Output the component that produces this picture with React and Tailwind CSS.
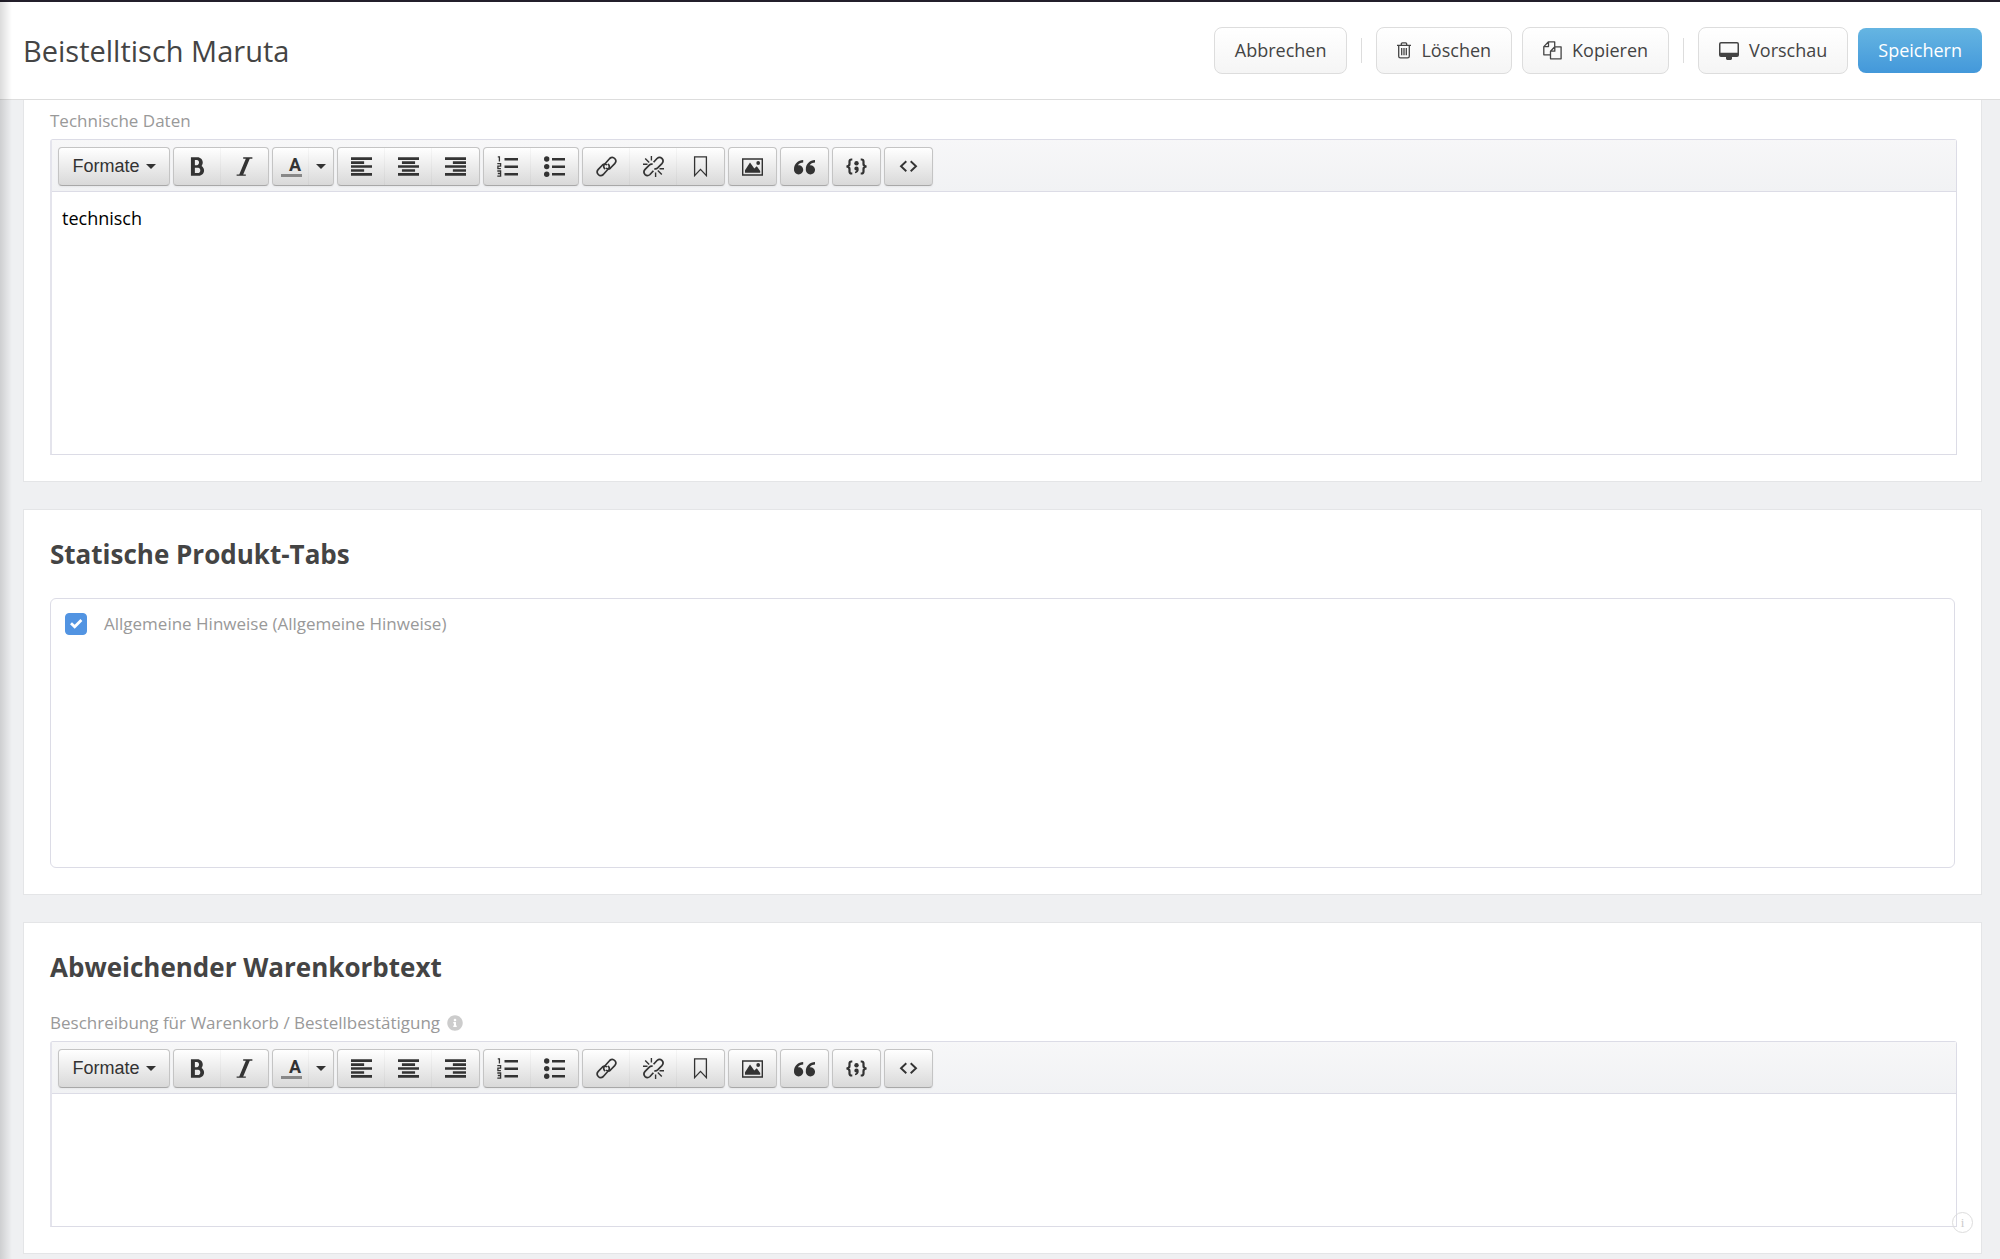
import React, { useState } from 'react';
import {
  ImBold,
  ImItalic,
  ImParagraphLeft,
  ImParagraphCenter,
  ImParagraphRight,
  ImQuotesLeft,
} from 'react-icons/im';
import { FaInfoCircle } from 'react-icons/fa';

// icônes de l'en-tête
const TrashIcon = () => (
  <svg className="w-[14px] h-[17px]" viewBox="0 0 14 17" fill="none" stroke="currentColor" strokeWidth="1.3" aria-hidden="true">
    <path d="M0 3.4h14M4.3 3.2V2Q4.3 .9 5.4 .9h3.2Q9.700 .9 9.700 2v1.2M1.700 3.600v10.600q0 1.700 1.700 1.700h7.200q1.700 0 1.700-1.700V3.600M4.700 6v7.300M7 6v7.300M9.300 6v7.300" />
  </svg>
);

const CopyIcon = () => (
  <svg className="w-[19px] h-[19px]" viewBox="0 0 19 19" fill="none" stroke="currentColor" strokeWidth="1.3" strokeLinejoin="round" aria-hidden="true">
    <path d="M7.500 13.800H.8V5.600L5.500 .8h6.200v5M5.500 .8v4.800H.8" />
    <path d="M7.500 10.200l4.300-4.400h6.300v12H7.500zM11.800 5.800v4.400H7.500" />
  </svg>
);

const MonitorIcon = () => (
  <svg className="w-[20px] h-[18px]" viewBox="0 0 20 18" fill="currentColor" aria-hidden="true">
    <path fillRule="evenodd" d="M2 0h16q2 0 2 2v11q0 2-2 2h-5v2h-.5v1h-5v-1H7v-2H2q-2 0-2-2V2Q0 0 2 0zM1.500 2v8.800h17V2q0-.5-.5-.5H2q-.5 0-.5 .5z" />
  </svg>
);

// icônes de la barre d'outils
const NumListIcon = () => (
  <svg className="w-[21px] h-[21px]" viewBox="0 0 21 21" fill="currentColor" aria-hidden="true">
    <path d="M7.500 2h13.500v2.500H7.500zM7.500 9.500h13.500v2.500H7.500zM7.500 17h13.500v2.500H7.500z" />
    <path d="M.8 .8H2.400V5.600M.3 7.700h3.300v2.500H.9v2.400h3M.3 15h3.300v5.200H.3M.8 17.500h2.800" fill="none" stroke="currentColor" strokeWidth="1.3" />
  </svg>
);

const BulletListIcon = () => (
  <svg className="w-[21px] h-[21px]" viewBox="0 0 21 21" fill="currentColor" aria-hidden="true">
    <path d="M8 2h13v2.500H8zM8 9.500h13v2.500H8zM8 17h13v2.500H8z" />
    <circle cx="2.700" cy="3" r="2.700" />
    <circle cx="2.700" cy="10.600" r="2.700" />
    <circle cx="2.700" cy="18.200" r="2.700" />
  </svg>
);

const LinkIcon = () => (
  <svg className="w-[21px] h-[21px]" viewBox="0 0 21 21" fill="none" stroke="currentColor" strokeWidth="1.700" strokeLinecap="round" aria-hidden="true">
    <path d="M8.500 12.500q-1.800-2.400 .3-4.500l4.900-5.500q2.700-2.400 5 0q2.400 2.600 0 5.200l-4.200 4.300q-1.900 1.700-4 .4" />
    <path d="M12.500 8.500q1.800 2.400-.3 4.500l-4.900 5.500q-2.700 2.400-5 0q-2.400-2.600 0-5.200l4.200-4.300q1.900-1.700 4-.4" />
  </svg>
);

const UnlinkIcon = () => (
  <svg className="w-[21px] h-[21px]" viewBox="0 0 21 21" fill="none" stroke="currentColor" strokeWidth="1.700" aria-hidden="true">
    <path d="M10.600 6.300l3.400-3.800q2.600-2.400 4.900-.1q2.400 2.600 0 5.200l-4.200 4.300q-1.500 1.400-3.400 .8" />
    <path d="M10.400 14.700l-3.400 3.800q-2.600 2.400-4.900 .1q-2.400-2.600 0-5.200l4.200-4.300q1.500-1.400 3.400-.8" />
    <path d="M8.400 0v4.500M2.200 2.500l4 4M0 8.200h4.500M12.600 21v-4.500M18.800 18.500l-4-4M21 12.800h-4.500" strokeWidth="1.400" />
  </svg>
);

const BookmarkIcon = () => (
  <svg className="w-[21px] h-[21px]" viewBox="0 0 21 21" fill="none" stroke="currentColor" strokeWidth="1.300" aria-hidden="true">
    <path d="M4.600 .8h11.800v18.800l-5.900-6.200-5.900 6.200z" />
  </svg>
);

const ImageIcon = () => (
  <svg className="w-[21px] h-[21px]" viewBox="0 0 21 21" fill="currentColor" aria-hidden="true">
    <path d="M.7 3h19.600v16H.7z" fill="none" stroke="currentColor" strokeWidth="1.400" />
    <path d="M3 16.800v-2.600L8 6.500l4.300 6 2.500-2.300 3.400 4.800v1.800z" />
    <circle cx="16.200" cy="7" r="1.900" />
  </svg>
);

const CodeSampleIcon = () => (
  <svg className="w-[21px] h-[21px]" viewBox="0 0 21 21" fill="none" stroke="currentColor" strokeWidth="2.200" aria-hidden="true">
    <path d="M6.300 3.500H5.500q-2 0-2 2v2.600q0 2.100-3 2.400q3 .3 3 2.400v2.600q0 2 2 2h.8M14.700 3.500h.8q2 0 2 2v2.600q0 2.100 3 2.400q-3 .3-3 2.400v2.600q0 2-2 2h-.8" />
    <circle cx="10.500" cy="7.300" r="2.200" fill="currentColor" stroke="none" />
    <path d="M8.300 12.700a2.200 2.200 0 1 1 4.400 0q.3 3.700-3.700 4.500v-1.500q1.300-.5 1.400-1.200q-2.100-.2-2.100-1.800z" fill="currentColor" stroke="none" />
  </svg>
);

const CodeIcon = () => (
  <svg className="w-[21px] h-[21px]" viewBox="0 0 21 21" fill="none" stroke="currentColor" strokeWidth="1.900" aria-hidden="true">
    <path d="M8.300 5.300L3 10.300l5.300 5M12.700 5.300l5.300 5-5.300 5" />
  </svg>
);

const Caret = () => (
  <svg className="w-[10px] h-[5px]" viewBox="0 0 10 5" fill="currentColor" aria-hidden="true">
    <path d="M0 0h10L5 5z" />
  </svg>
);

const toolGroups = [
  [
    { label: 'Linksbündig', icon: <ImParagraphLeft size={21} /> },
    { label: 'Zentriert', icon: <ImParagraphCenter size={21} /> },
    { label: 'Rechtsbündig', icon: <ImParagraphRight size={21} /> },
  ],
  [
    { label: 'Nummerierte Liste', icon: <NumListIcon /> },
    { label: 'Aufzählung', icon: <BulletListIcon /> },
  ],
  [
    { label: 'Link einfügen', icon: <LinkIcon /> },
    { label: 'Link entfernen', icon: <UnlinkIcon /> },
    { label: 'Textmarke', icon: <BookmarkIcon /> },
  ],
  [{ label: 'Bild einfügen', icon: <ImageIcon /> }],
  [{ label: 'Zitat', icon: <ImQuotesLeft size={21} /> }],
  [{ label: 'Codebeispiel', icon: <CodeSampleIcon /> }],
  [{ label: 'Quellcode', icon: <CodeIcon /> }],
];

const ToolGroup = ({ children }) => (
  <div className="flex h-[39px] rounded-[4px] border border-[#c4c4c4] border-b-[#a8a8a8] bg-linear-to-b from-white to-[#d9d9d9] shadow-xs divide-x divide-black/3">
    {children}
  </div>
);

const ToolButton = ({ label, icon }) => (
  <button type="button" aria-label={label} className="w-[47px] flex items-center justify-center">
    {icon}
  </button>
);

const Editor = ({ id, value, onChange, size }) => (
  <div className="-mr-[2px] border border-l-2 border-[#dcdce6] border-l-[#e4e4ec] rounded-t-[3px]">
    <div className="flex flex-wrap gap-[3px] px-[6px] pt-[7px] pb-[5px] bg-linear-to-b from-[#f7f7f8] to-[#f1f2f4] border-b border-[#dcdce6] text-[#333333]">
      <ToolGroup>
        <button type="button" className="w-[110px] flex items-center justify-center gap-[6px] font-['Liberation_Sans',sans-serif] text-[18px]">
          Formate
          <Caret />
        </button>
      </ToolGroup>
      <ToolGroup>
        <ToolButton label="Fett" icon={<ImBold size={21} />} />
        <ToolButton label="Kursiv" icon={<ImItalic size={21} />} />
      </ToolGroup>
      <ToolGroup>
        <button type="button" aria-label="Textfarbe" className="pl-2 pr-[6px] flex items-center">
          <span className="w-[21px] h-[21px] pr-px border-b-[3px] border-[#888888] text-right text-[18px] leading-[18px] font-bold font-['Roboto',sans-serif]">A</span>
        </button>
        <button type="button" aria-label="Farbe wählen" className="w-[24px] flex items-center justify-center">
          <Caret />
        </button>
      </ToolGroup>
      {toolGroups.map((group, index) => (
        <ToolGroup key={index}>
          {group.map((tool) => (
            <ToolButton key={tool.label} label={tool.label} icon={tool.icon} />
          ))}
        </ToolGroup>
      ))}
    </div>
    <textarea
      id={id}
      rows={size}
      value={value}
      onChange={(e) => onChange(e.target.value)}
      className="block w-full resize-none px-[10px] pt-[13px] pb-[15px] text-[18px] leading-[26px] text-black outline-none"
    />
  </div>
);

const Card = ({ title, children }) => (
  <section className="bg-white border border-[#e4e5e7] p-[26px]">
    <h2 className="text-[26px] leading-[36px] font-bold text-[#444444] mb-[26px]">{title}</h2>
    {children}
  </section>
);

const HeaderButton = ({ icon, children }) => (
  <button type="button" className="h-[47px] px-5 flex items-center gap-[10px] rounded-[8px] border border-[#dddddd] bg-linear-to-b from-white to-[#f5f5f5]">
    {icon}
    {children}
  </button>
);

const Separator = () => <span className="w-px h-[25px] mx-1 bg-[#dddddd]" />;

const App = () => {
  const [technik, setTechnik] = useState('technisch');
  const [warenkorb, setWarenkorb] = useState('');
  const [hinweise, setHinweise] = useState(true);

  return (
    <div className="relative min-h-screen bg-[#eff0f2] font-['Open_Sans',sans-serif] text-[#444444]">

      {/* en-tête */}
      <header className="flex items-center justify-between border-t-2 border-t-[#231f2b] border-b border-b-[#dddddd] bg-white pl-[23px] pr-[18px] py-[25px]">
        <h1 className="text-[29px] leading-[47px]">Beistelltisch Maruta</h1>
        <div className="flex items-center gap-[10px] text-[18px]">
          <HeaderButton>Abbrechen</HeaderButton>
          <Separator />
          <HeaderButton icon={<TrashIcon />}>Löschen</HeaderButton>
          <HeaderButton icon={<CopyIcon />}>Kopieren</HeaderButton>
          <Separator />
          <HeaderButton icon={<MonitorIcon />}>Vorschau</HeaderButton>
          <button type="button" className="h-[45px] px-5 rounded-[8px] bg-linear-to-b from-[#65b5e2] to-[#4398da] text-white">
            Speichern
          </button>
        </div>
      </header>

      <main className="flex flex-col gap-[27px] pl-[23px] pr-[18px] pb-[4px]">
        <section className="bg-white border border-t-0 border-[#e4e5e7] px-[26px] pt-[9px] pb-[26px]">
          <label htmlFor="technik" className="block mb-[6px] text-[17px] leading-[24px] text-[#999999]">Technische Daten</label>
          <Editor id="technik" value={technik} onChange={setTechnik} size={9} />
        </section>

        <Card title="Statische Produkt-Tabs">
          <div className="min-h-[270px] rounded-[6px] border border-[#dcdce6] px-[14px] py-[13px]">
            <label className="flex items-center gap-[17px] text-[17px] leading-[24px] text-[#999999]">
              <span className="grid shrink-0">
                <input
                  type="checkbox"
                  checked={hinweise}
                  onChange={(e) => setHinweise(e.target.checked)}
                  className="peer col-start-1 row-start-1 appearance-none w-[22px] h-[22px] rounded-[4px] border border-[#5294e2] checked:bg-[#5294e2]"
                />
                <svg className="col-start-1 row-start-1 w-[22px] h-[22px] pointer-events-none opacity-0 peer-checked:opacity-100" viewBox="0 0 22 22" fill="none" stroke="white" strokeWidth="2.800" aria-hidden="true">
                  <path d="M6 10.200l3.700 3.600 6.700-6.800" />
                </svg>
              </span>
              Allgemeine Hinweise (Allgemeine Hinweise)
            </label>
          </div>
        </Card>

        <Card title="Abweichender Warenkorbtext">
          <label htmlFor="warenkorb" className="flex items-center gap-[7px] mb-[6px] text-[17px] leading-[24px] text-[#999999]">
            Beschreibung für Warenkorb / Bestellbestätigung
            <FaInfoCircle size={16} className="text-[#cccccc]" />
          </label>
          <Editor id="warenkorb" value={warenkorb} onChange={setWarenkorb} size={4} />
        </Card>
      </main>

      {/* ombre du menu latéral */}
      <div className="absolute inset-y-0 left-0 w-[12px] pointer-events-none bg-linear-to-r from-black/14 to-transparent" />

      <button type="button" aria-label="Info" className="absolute right-[27px] bottom-[26px] w-[21px] h-[21px] rounded-full border border-[#dddddd] flex items-center justify-center text-[13px] leading-none text-[#cccccc] font-['Liberation_Serif',serif]">
        i
      </button>
    </div>
  );
};

export default App;
